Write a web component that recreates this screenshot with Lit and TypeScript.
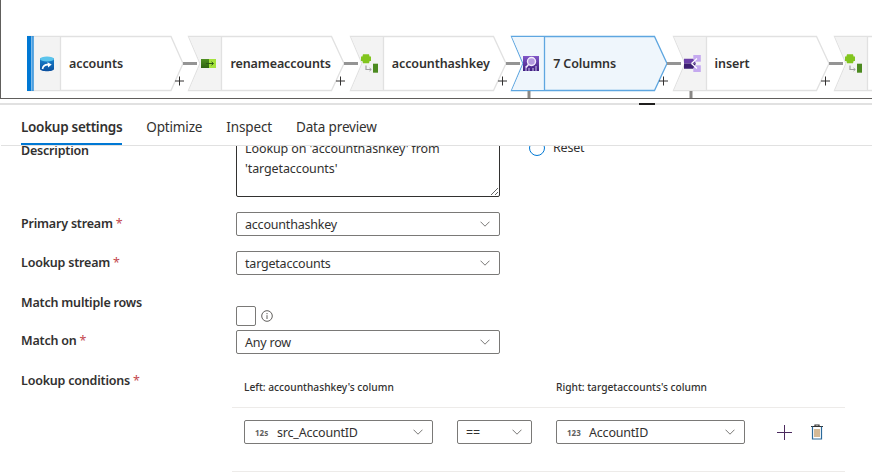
import { LitElement, html, css, svg } from 'lit';
import { customElement } from 'lit/decorators.js';

const dbIcon = svg`
  <defs>
    <linearGradient id="db" x1="0" y1="0" x2="0" y2="1">
      <stop offset="0" stop-color="#1a86d0"/>
      <stop offset="1" stop-color="#0b4f9e"/>
    </linearGradient>
  </defs>
  <path d="M13 23c0-2 14-2 14 0v10c0 3-14 3-14 0z" fill="url(#db)"/>
  <ellipse cx="20" cy="23" rx="7" ry="2.600" fill="#5bc4ec"/>
  <path d="M15.500 33c.5-3 3-4.500 6-4.300" fill="none" stroke="#fff" stroke-width="1.600"/>
  <path d="M20.500 26.200l4.200 2.400-3.600 2.800z" fill="#fff"/>`;

const renameIcon = svg`
  <defs>
    <linearGradient id="rn" x1="0" y1="0" x2="0" y2="1">
      <stop offset="0" stop-color="#4f8f22"/>
      <stop offset="1" stop-color="#2f6412"/>
    </linearGradient>
  </defs>
  <rect x="13" y="23" width="8" height="9" fill="url(#rn)"/>
  <rect x="21" y="23" width="7" height="9" fill="#a4e23c"/>
  <path d="M18 27.500h7" stroke="#2d5a14" stroke-width="1"/>
  <path d="M23.500 25.800l2 1.700-2 1.700" fill="none" stroke="#2d5a14" stroke-width="1"/>`;

const alterIcon = svg`
  <path d="M13 18.300h6l.6 2.200h1.400v4.500h-1.400l-.6 2.300h-6l-.6-2.300h-1.400v-4.500h1.400z" fill="#82c51e"/>
  <path d="M16 29.500v4h5" fill="none" stroke="#a0a0a0" stroke-width="1.200"/>
  <path d="M19.500 32l1.800 1.500-1.800 1.500" fill="none" stroke="#a0a0a0" stroke-width="1"/>
  <rect x="23" y="27.700" width="5" height="9" fill="#4c8a20"/>`;

const lookupIcon = svg`
  <defs>
    <linearGradient id="lk" x1="0" y1="0" x2="0" y2="1">
      <stop offset="0" stop-color="#8257c8"/>
      <stop offset="1" stop-color="#3e1f80"/>
    </linearGradient>
  </defs>
  <rect x="12" y="20" width="16" height="15" fill="url(#lk)"/>
  <path d="M15 35v-5M18 35v-3M22 35v-3M25 35v-5" stroke="#d5c6ef" stroke-width="1"/>
  <circle cx="20.500" cy="25.500" r="4" fill="#b49ae0" stroke="#f3edfc" stroke-width="1.400"/>
  <path d="M17.500 28.500l-2.500 3" stroke="#f3edfc" stroke-width="1.600"/>`;

const splitIcon = svg`
  <rect x="20.300" y="19" width="7.500" height="6.700" fill="#c5a9ef"/>
  <rect x="20.300" y="29.300" width="7.500" height="6.700" fill="#c5a9ef"/>
  <path d="M11 22.700h9l3 4.800H11z" fill="#6b3fa8"/>
  <path d="M11 27.500h12l-3 5.200h-9z" fill="#3d1f73"/>
  <path d="M18.500 27.500l5.500-5M18.500 27.500l5.500 5" fill="none" stroke="#fff" stroke-width="1.300"/>`;

interface FlowNode {
  label: string;
  icon: unknown;
  source?: boolean;
  selected?: boolean;
  stub?: boolean;
}

const nodes: FlowNode[] = [
  { label: 'accounts', icon: dbIcon, source: true },
  { label: 'renameaccounts', icon: renameIcon },
  { label: 'accounthashkey', icon: alterIcon },
  { label: '7 Columns', icon: lookupIcon, selected: true, stub: true },
  { label: 'insert', icon: splitIcon, stub: true },
  { label: '', icon: alterIcon },
];

@customElement('app-root')
export class AppRoot extends LitElement {
  static styles = css`
    :host {
      display: block;
      width: 872px;
      height: 472px;
      overflow: hidden;
      background: #fff;
      color: #323130;
      font-family: 'Noto Sans', 'Open Sans', sans-serif;
      font-size: 12.500px;
    }
    .canvas {
      display: flex;
      gap: 5.400px;
      height: 62px;
      padding: 36px 0 0 26px;
      border-left: 1px solid #605e5c;
      border-bottom: 1px solid #605e5c;
      overflow: hidden;
    }
    .node {
      position: relative;
      flex: none;
      display: flex;
      align-items: center;
      width: 156px;
      height: 55px;
      box-sizing: border-box;
      padding-left: 42px;
    }
    .shape {
      position: absolute;
      left: 0;
      top: 0;
      overflow: visible;
    }
    .node-label {
      position: relative;
      font-weight: 600;
      font-size: 12.500px;
      letter-spacing: -0.1px;
      white-space: nowrap;
    }
    .splitter {
      position: relative;
      height: 6px;
    }
    .splitter-bar {
      position: absolute;
      left: 0;
      right: 0;
      bottom: 0;
      height: 2px;
      background: #e1e1e1;
    }
    .splitter-handle {
      position: absolute;
      left: 639px;
      bottom: 0;
      width: 16px;
      height: 2px;
      background: #201f1e;
    }
    .tabs {
      display: flex;
      gap: 24px;
      height: 40px;
      padding-left: 20px;
      border-bottom: 1px solid #e1e1e1;
      margin-left: 1px;
      font-size: 13.500px;
      letter-spacing: -0.15px;
    }
    .tab {
      display: flex;
      align-items: center;
      padding-top: 6px;
      box-sizing: border-box;
      height: 40px;
      border-bottom: 2px solid transparent;
      white-space: nowrap;
    }
    .tab.active {
      font-weight: 600;
      letter-spacing: -0.29px;
      border-bottom-color: #0078d4;
    }
    .body {
      height: 326px;
      overflow: hidden;
    }
    .form {
      display: flex;
      flex-direction: column;
      margin-top: -20px;
      padding-left: 21px;
      letter-spacing: -0.2px;
    }
    .row {
      display: grid;
      grid-template-columns: 215px 264px auto;
      align-items: start;
    }
    .row-primary { margin-top: 15px; }
    .row-lookup { margin-top: 15px; }
    .row-multi { margin-top: 17px; }
    .row-match { margin-top: 4px; }
    .row-cond { margin-top: 17px; }
    .label {
      font-weight: 600;
      line-height: 20px;
      margin-top: 1px;
      white-space: nowrap;
    }
    .label.nudge { margin-top: 2px; }
    .label.desc { margin-top: 15px; }
    .label.flush { margin-top: 0; }
    .req {
      color: #c4474e;
      font-weight: 400;
      margin-left: 3px;
    }
    textarea {
      box-sizing: border-box;
      display: block;
      width: 264px;
      height: 71px;
      padding: 12px 8px 0;
      margin: 0;
      border: 1px solid #323130;
      border-radius: 2px;
      outline: none;
      background: #fff;
      color: #323130;
      font: inherit;
      letter-spacing: -0.1px;
      line-height: 20px;
    }
    .reset {
      display: flex;
      align-items: center;
      gap: 8px;
      margin: 13px 0 0 29px;
      line-height: 16px;
    }
    .reset-text { margin-top: 1px; }
    .radio {
      width: 16px;
      height: 16px;
      box-sizing: border-box;
      border: 1.500px solid #0078d4;
      border-radius: 50%;
    }
    .select {
      box-sizing: border-box;
      display: flex;
      align-items: center;
      height: 24px;
      padding: 0 8px;
      border: 1px solid #7a7977;
      border-bottom-width: 1.500px;
      border-radius: 2px;
      background: #fff;
      white-space: nowrap;
    }
    .select-text { flex: 1; }
    .chev { flex: none; margin-right: 1px; }
    .check-wrap {
      display: flex;
      align-items: center;
      gap: 5px;
      margin-top: 14px;
    }
    .check {
      box-sizing: border-box;
      width: 20px;
      height: 20px;
      border: 1px solid #7a7977;
      border-radius: 2px;
    }
    .cond-wrap {
      grid-column: 2 / 4;
      width: 613px;
      margin: 6px 0 0 -4px;
    }
    .cond-head,
    .cond-row {
      display: grid;
      grid-template-columns: 189px 75px 189px auto;
      column-gap: 24px;
      padding-left: 12px;
    }
    .cond-head {
      height: 30px;
      align-items: start;
      font-size: 10.200px;
      font-weight: 500;
      letter-spacing: 0;
      line-height: 20px;
      border-bottom: 1px solid #edebe9;
    }
    .cond-row {
      height: 64px;
      padding-top: 12px;
      box-sizing: border-box;
      border-bottom: 1px solid #edebe9;
    }
    .cond-row .select { font-size: 12.500px; }
    .type {
      width: 16px;
      margin: 0 6px 0 2px;
      font-size: 8px;
      font-weight: 700;
      letter-spacing: 0;
      color: #605e5c;
    }
    .actions {
      display: flex;
      align-items: center;
      gap: 18px;
      height: 24px;
      margin-left: 8px;
    }
  `;

  private chevron() {
    return html`<svg class="chev" width="10" height="6" viewBox="0 0 10 6">
      <path d="M.5 .7L5 5.200 9.500 .7" fill="none" stroke="#7a7977" stroke-width="1"/>
    </svg>`;
  }

  private select(text: string, type?: string) {
    return html`<div class="select">
      ${type ? html`<span class="type">${type}</span>` : ''}
      <span class="select-text">${text}</span>
      ${this.chevron()}
    </div>`;
  }

  private node(n: FlowNode) {
    const edge = n.selected ? '#5ea6e0' : '#e1e1e1';
    const fill = n.selected ? '#eff6fc' : '#fff';
    const cell = n.selected ? '#eff6fc' : '#f3f3f3';
    const outline = n.source
      ? 'M1 .5H144L156 27.500 144 54.500H1Z'
      : 'M.5 .5H143.500L156 27.500 143.500 54.500H.5L12 27.500Z';
    const cellPath = n.source
      ? 'M6 1H33V54H6Z'
      : 'M1 1H33V54H1L12.500 27.500Z';
    return html`<div class="node">
      <svg class="shape" width="156" height="55" viewBox="0 0 156 55">
        <path d=${outline} fill=${fill} stroke=${edge} stroke-width="1.300"/>
        <path d=${cellPath} fill=${cell}/>
        <path d="M33.500 1V54" stroke=${edge} stroke-width="1.300"/>
        ${n.source
          ? svg`<rect x="0" y="0" width="4.500" height="55" fill="#0078d4"/>
                <rect x="5.300" y="0" width="1.300" height="55" fill="#0078d4"/>`
          : ''}
        <path d="M156 27.500h14" stroke="#949494" stroke-width="3"/>
        <path d="M152.500 49.500v-9M148 45h9" stroke="#323130" stroke-width="1" fill="none"/>
        ${n.stub ? svg`<path d="M18 55v7" stroke="#8a8886" stroke-width="3"/>` : ''}
        ${n.icon}
      </svg>
      <span class="node-label">${n.label}</span>
    </div>`;
  }

  render() {
    return html`
      <div class="canvas">${nodes.map((n) => this.node(n))}</div>
      <div class="splitter">
        <div class="splitter-bar"></div>
        <div class="splitter-handle"></div>
      </div>
      <div class="tabs">
        <div class="tab active">Lookup settings</div>
        <div class="tab">Optimize</div>
        <div class="tab">Inspect</div>
        <div class="tab">Data preview</div>
      </div>
      <div class="body">
        <div class="form">
          <div class="row">
            <div class="label desc">Description</div>
            <textarea readonly .value=${"Lookup on 'accounthashkey' from 'targetaccounts'"}></textarea>
            <div class="reset"><span class="radio"></span><span class="reset-text">Reset</span></div>
          </div>
          <div class="row row-primary">
            <div class="label nudge">Primary stream<span class="req">*</span></div>
            ${this.select('accounthashkey')}
          </div>
          <div class="row row-lookup">
            <div class="label nudge">Lookup stream<span class="req">*</span></div>
            ${this.select('targetaccounts')}
          </div>
          <div class="row row-multi">
            <div class="label">Match multiple rows</div>
            <div class="check-wrap">
              <div class="check"></div>
              <svg width="12" height="12" viewBox="0 0 12 12">
                <circle cx="6" cy="6" r="5.300" fill="none" stroke="#605e5c" stroke-width="1"/>
                <path d="M6 5.200V9M6 3v1.200" stroke="#605e5c" stroke-width="1"/>
              </svg>
            </div>
          </div>
          <div class="row row-match">
            <div class="label">Match on<span class="req">*</span></div>
            ${this.select('Any row')}
          </div>
          <div class="row row-cond">
            <div class="label flush">Lookup conditions<span class="req">*</span></div>
            <div class="cond-wrap">
              <div class="cond-head">
                <span>Left: accounthashkey's column</span>
                <span></span>
                <span>Right: targetaccounts's column</span>
              </div>
              <div class="cond-row">
                ${this.select('src_AccountID', '12s')}
                ${this.select('==')}
                ${this.select('AccountID', '123')}
                <div class="actions">
                  <svg width="15" height="15" viewBox="0 0 15 15">
                    <path d="M7.500 0v15M0 7.500h15" stroke="#4b2a5e" stroke-width="1" fill="none"/>
                  </svg>
                  <svg width="14" height="16" viewBox="0 0 14 16">
                    <path d="M1 2.500h12M5 2.500V1h4v1.500" fill="none" stroke="#323130" stroke-width="1.200"/>
                    <path d="M2.500 2.500v12.500h9V2.500" fill="none" stroke="#2b6a9b" stroke-width="1.200"/>
                    <path d="M5 5v8M7 5v8M9 5v8" stroke="#a8742f" stroke-width="1"/>
                  </svg>
                </div>
              </div>
            </div>
          </div>
        </div>
      </div>
    `;
  }
}
